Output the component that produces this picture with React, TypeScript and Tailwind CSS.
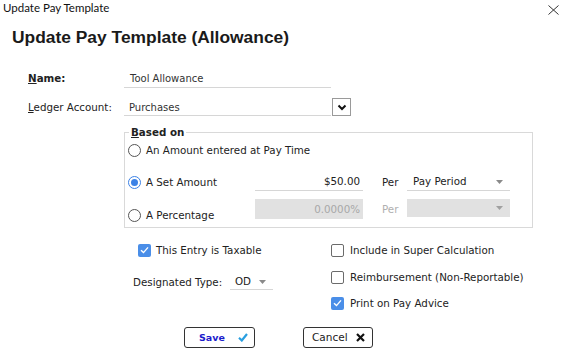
import React from "react";

function Radio({ checked }: { checked?: boolean }) {
  return checked ? (
    <span className="flex items-center justify-center w-[13px] h-[13px] rounded-full border border-[#3c82e6] bg-white shrink-0">
      <span className="w-[7px] h-[7px] rounded-full bg-[#3c82e6]" />
    </span>
  ) : (
    <span className="w-[13px] h-[13px] rounded-full border border-[#555] bg-white shrink-0" />
  );
}

function Check({ checked }: { checked?: boolean }) {
  return checked ? (
    <span className="flex items-center justify-center w-[13px] h-[13px] rounded-[2px] bg-[#4a8ee8] shrink-0">
      <svg width="9" height="8" viewBox="0 0 9 8">
        <path d="M1 4.2 L3.5 6.6 L8 1.4" fill="none" stroke="white" strokeWidth="1.4" />
      </svg>
    </span>
  ) : (
    <span className="w-[13px] h-[13px] rounded-[2px] border border-[#6b6b6b] bg-white shrink-0" />
  );
}

function Caret({ color = "#8a8a8a" }: { color?: string }) {
  return (
    <svg width="7" height="4" viewBox="0 0 7 4">
      <path d="M0 0 L7 0 L3.5 4 Z" fill={color} />
    </svg>
  );
}

export default function App() {
  return (
    <div className="w-[565px] h-[348px] bg-white overflow-hidden text-[#222] font-['DejaVu_Sans',Verdana,sans-serif] text-[10.3px] leading-[13px]">
      {/* title bar */}
      <div className="flex items-start justify-between h-[17px] pl-[3px] pr-[6px]">
        <span className="font-['Lato',sans-serif] text-[11.5px] leading-[16px] text-[#111]">Update Pay Template</span>
        <svg className="mt-[5px]" width="11" height="10" viewBox="0 0 11 10">
          <path d="M0.5 0.5 L10.5 9.5 M10.5 0.5 L0.5 9.5" stroke="#333" strokeWidth="1" fill="none" />
        </svg>
      </div>

      <h1 className="mt-[9px] pl-[12px] font-['Liberation_Sans',Arial,sans-serif] font-bold text-[17.4px] leading-[22px] text-[#1a1a1a]">
        Update Pay Template (Allowance)
      </h1>

      {/* Name */}
      <div className="mt-[20px] flex items-center h-[20px] pl-[28px]">
        <span className="w-[96px] font-bold">
          <span className="underline">N</span>ame:
        </span>
        <div className="w-[207px] h-[20px] border-b border-[#d6d6d6] flex items-center pl-[6px] pt-[2px] text-[10px] text-[#333]">
          Tool Allowance
        </div>
      </div>

      {/* Ledger */}
      <div className="mt-[8px] flex items-center h-[20px] pl-[28px]">
        <span className="w-[96px] pt-[2px]">
          <span className="underline">L</span>edger Account:
        </span>
        <div className="w-[207px] h-[20px] border-b border-[#d6d6d6] flex items-center pl-[5px] pt-[3px] text-[10px] text-[#333]">
          Purchases
        </div>
        <div className="ml-[1px] self-end w-[19px] h-[18px] border border-[#9a9a9a] flex items-center justify-center bg-white">
          <svg width="10" height="7" viewBox="0 0 10 7">
            <path d="M1.5 1.5 L5 5 L8.5 1.5" stroke="#111" strokeWidth="2" fill="none" />
          </svg>
        </div>
      </div>

      {/* Based on */}
      <fieldset className="mt-[10px] ml-[124px] w-[409px] border border-[#d9d9d9] pb-[8px]">
        <legend className="ml-[4px] pl-[2px] pr-[2px] font-bold leading-[13px]">
          <span className="underline">B</span>ased on
        </legend>
        <div className="pt-[2px] flex items-center h-[20px] pl-[3px] gap-[5px]">
          <Radio />
          <span>An Amount entered at Pay Time</span>
        </div>
        <div className="mt-[14px] flex items-center h-[18px]">
          <div className="w-[130px] flex items-center pl-[3px] gap-[5px]">
            <Radio checked />
            <span>A Set Amount</span>
          </div>
          <div className="w-[108px] h-[18px] border-b border-[#d6d6d6] flex items-center justify-end pr-[3px]">$50.00</div>
          <span className="ml-[19px] w-[25px]">Per</span>
          <div className="w-[103px] h-[18px] border-b border-[#d6d6d6] flex items-center justify-between pl-[6px] pr-[7px]">
            <span>Pay Period</span>
            <Caret />
          </div>
        </div>
        <div className="mt-[8px] flex h-[20px]">
          <div className="w-[130px] h-[20px] pt-[12px] flex items-center pl-[3px] gap-[5px]">
            <Radio />
            <span>A Percentage</span>
          </div>
          <div className="w-[108px] h-[20px] bg-[#e1e1e1] flex items-center justify-end pr-[3px] text-[#a8a8a8]">0.0000%</div>
          <span className="ml-[19px] w-[25px] flex items-center text-[#b0b0b0]">Per</span>
          <div className="w-[103px] h-[18px] bg-[#e1e1e1] flex items-center justify-end pr-[7px]">
            <Caret color="#a0a0a0" />
          </div>
        </div>
      </fieldset>

      {/* options */}
      <div className="flex">
        <div className="ml-[133px] w-[198px]">
          <div className="mt-[14px] h-[16px] flex items-center pl-[5px] gap-[5px]">
            <Check checked />
            <span>This Entry is Taxable</span>
          </div>
          <div className="mt-[16px] h-[16px] flex items-center">
            <span className="w-[97px]">Designated Type:</span>
            <div className="w-[43px] h-[16px] border-b border-[#d6d6d6] flex items-center justify-between pl-[5px] pr-[7px]">
              <span>OD</span>
              <Caret />
            </div>
          </div>
        </div>
        <div>
          <div className="mt-[14px] h-[16px] flex items-center gap-[6px]">
            <Check />
            <span>Include in Super Calculation</span>
          </div>
          <div className="mt-[11px] h-[16px] flex items-center gap-[6px]">
            <Check />
            <span>Reimbursement (Non-Reportable)</span>
          </div>
          <div className="mt-[10px] h-[16px] flex items-center gap-[6px]">
            <Check checked />
            <span>Print on Pay Advice</span>
          </div>
        </div>
      </div>

      {/* buttons */}
      <div className="mt-[16px] flex ml-[184px]">
        <div className="w-[71px] h-[21px] border border-[#333] rounded-[3px] flex items-center justify-between pl-[14px] pr-[6px]">
          <span className="font-bold text-[9.5px] text-[#1c1ccc]">Save</span>
          <svg width="10" height="9" viewBox="0 0 10 9">
            <path d="M1 4.8 L3.8 7.5 L9 1" stroke="#2a9fe0" strokeWidth="2.2" fill="none" />
          </svg>
        </div>
        <div className="ml-[48px] w-[70px] h-[21px] border border-[#333] rounded-[3px] flex items-center justify-between pl-[8px] pr-[7px]">
          <span className="text-[10.5px] text-[#222]">Cancel</span>
          <svg width="9" height="9" viewBox="0 0 9 9">
            <path d="M1 1 L8 8 M8 1 L1 8" stroke="#111" strokeWidth="2.2" fill="none" />
          </svg>
        </div>
      </div>
    </div>
  );
}
